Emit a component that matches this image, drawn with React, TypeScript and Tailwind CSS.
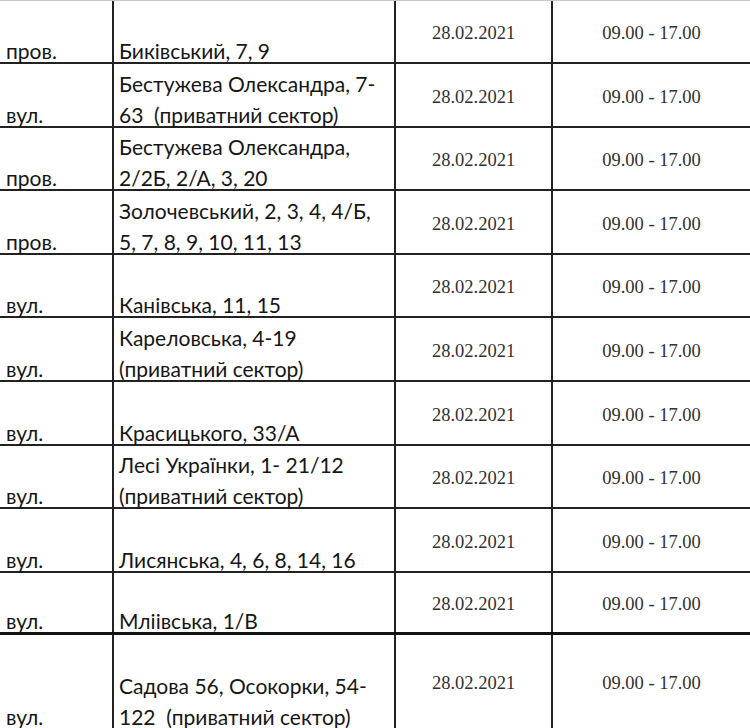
import React from "react";

type Row = { t: string; a: string[]; h: string; last?: boolean };

const rows: Row[] = [
  { t: "пров.", a: ["Биківський, 7, 9"], h: "h-[63px]" },
  { t: "вул.", a: ["Бестужева Олександра, 7-", "63  (приватний сектор)"], h: "h-[64px]" },
  { t: "пров.", a: ["Бестужева Олександра,", "2/2Б, 2/А, 3, 20"], h: "h-[63px]" },
  { t: "пров.", a: ["Золочевський, 2, 3, 4, 4/Б,", "5, 7, 8, 9, 10, 11, 13"], h: "h-[64px]" },
  { t: "вул.", a: ["Канівська, 11, 15"], h: "h-[63px]" },
  { t: "вул.", a: ["Кареловська, 4-19", "(приватний сектор)"], h: "h-[64px]" },
  { t: "вул.", a: ["Красицького, 33/А"], h: "h-[64px]" },
  { t: "вул.", a: ["Лесі Українки, 1- 21/12", "(приватний сектор)"], h: "h-[63px]" },
  { t: "вул.", a: ["Лисянська, 4, 6, 8, 14, 16"], h: "h-[64px]" },
  { t: "вул.", a: ["Мліівська, 1/В"], h: "h-[62px]", last: true },
  { t: "вул.", a: ["Садова 56, Осокорки, 54-", "122  (приватний сектор)"], h: "h-[93px]" },
];

export default function App() {
  return (
    <div className="w-[750px] h-[728px] overflow-hidden bg-white border-t border-[#c9c9c9] text-[#161616]">
      {rows.map((r, i) => (
        <div
          key={i}
          className={`grid grid-cols-[114px_282px_157px_1fr] ${r.h} ${
            r.last ? "border-b-[3px] border-[#111]" : i === rows.length - 1 ? "" : "border-b-2 border-[#222]"
          }`}
        >
          <div className="border-r-2 border-[#222] flex items-end pl-[6px] font-['Lato','Liberation_Sans',sans-serif] text-[21px] leading-[31px]">
            <div className="-mb-[4px]">{r.t}</div>
          </div>
          <div className="border-r-2 border-[#222] flex flex-col justify-end pl-[5px] font-['Lato','Liberation_Sans',sans-serif] text-[21px] leading-[31px] whitespace-pre">
            <div className="-mb-[4px]">
              {r.a.map((l, j) => (
                <div key={j}>{l}</div>
              ))}
            </div>
          </div>
          <div className="border-r-2 border-[#222] flex items-center justify-center pt-[5px] font-['Liberation_Serif',serif] text-[18.5px] text-[#303030]">
            28.02.2021
          </div>
          <div className="flex items-center justify-center pt-[5px] font-['Liberation_Serif',serif] text-[18.5px] text-[#303030]">
            09.00 - 17.00
          </div>
        </div>
      ))}
    </div>
  );
}
